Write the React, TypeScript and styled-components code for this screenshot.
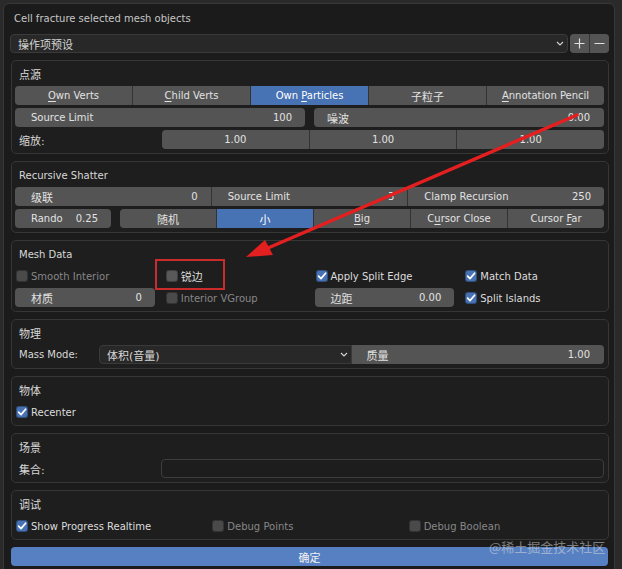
import React from "react";
import styled, { createGlobalStyle } from "styled-components";

const GlobalStyle = createGlobalStyle`
  html, body { margin: 0; padding: 0; }
  body {
    background: #2a2a2a;
    font-family: "DejaVu Sans", "Noto Sans CJK SC", sans-serif;
    font-size: 10px;
    color: #dcdcdc;
    overflow: hidden;
  }
  * { box-sizing: border-box; }
`;

const Stage = styled.div`
  position: relative;
  width: 622px;
  height: 569px;
  overflow: hidden;
  padding: 3px 7px 0 3px;
`;

const Dialog = styled.div`
  width: 612px;
  height: 600px;
  background: #1b1b1b;
  border: 1px solid #383838;
  border-radius: 6px;
  padding: 0 5px 0 7px;
  display: flex;
  flex-direction: column;
  gap: 7px;
`;

const Title = styled.div`
  height: 23px;
  padding: 6px 0 0 3px;
  display: flex;
  align-items: center;
  color: #c6c6c6;
`;

const Zh = styled.span`
  font-size: 11px;
`;

const U = styled.span`
  text-decoration: underline;
  text-decoration-thickness: 1px;
  text-underline-offset: 2px;
`;

const PresetRow = styled.div`
  display: flex;
  gap: 2px;
  height: 19px;
  margin-left: -1px;
`;

const Dropdown = styled.div<{ $joined?: boolean }>`
  flex: 1;
  min-width: 0;
  display: flex;
  align-items: center;
  justify-content: space-between;
  padding: 0 3px 0 7px;
  background: #282828;
  border: 1px solid #3a3a3a;
  border-radius: ${(p) => (p.$joined ? "4px 0 0 4px" : "4px")};
  color: #d6d6d6;
  white-space: nowrap;
`;

const Group = styled.div<{ $w?: number }>`
  display: flex;
  gap: 1px;
  background: #333333;
  border-radius: 4px;
  overflow: hidden;
  height: 19px;
  ${(p) => (p.$w ? `flex: 0 0 ${p.$w}px;` : "flex: 1;")}
`;

const IconBtn = styled.div`
  width: 19px;
  display: flex;
  align-items: center;
  justify-content: center;
  background: #545454;
`;

const Panel = styled.section`
  background: #1e1e1e;
  border: 1px solid #363636;
  border-radius: 5px;
  padding: 0 4px 4px 3px;
`;

const PanelHeader = styled.div`
  height: 25px;
  display: flex;
  align-items: center;
  padding: 1px 0 0 4px;
  color: #d8d8d8;
`;

const PanelBody = styled.div`
  display: flex;
  flex-direction: column;
  gap: 3px;
`;

const Row = styled.div<{ $gap?: number }>`
  display: flex;
  height: 19px;
  gap: ${(p) => p.$gap ?? 0}px;
`;

const MassRow = styled.div`
  display: grid;
  grid-template-columns: 84px 1fr 1fr;
  height: 19px;
`;

const Seg = styled.div<{ $on?: boolean }>`
  flex: 1;
  display: flex;
  align-items: center;
  justify-content: center;
  background: ${(p) => (p.$on ? "#4772b3" : "#545454")};
  color: ${(p) => (p.$on ? "#ffffff" : "#e2e2e2")};
  white-space: nowrap;
`;

const Num = styled.div<{ $pl?: number; $pr?: number }>`
  flex: 1;
  display: flex;
  align-items: center;
  justify-content: space-between;
  padding: 0 ${(p) => p.$pr ?? 13}px 0 ${(p) => p.$pl ?? 16}px;
  background: #545454;
  color: #e2e2e2;
  white-space: nowrap;
`;

const JoinedField = styled(Num)`
  border-radius: 0 4px 4px 0;
`;

const LabelCell = styled.div<{ $w: number }>`
  flex: 0 0 ${(p) => p.$w}px;
  display: flex;
  align-items: center;
  padding-left: 4px;
  color: #d8d8d8;
  white-space: nowrap;
`;

const TextBox = styled.div`
  flex: 1;
  border: 1px solid #3d3d3d;
  border-radius: 4px;
  background: #1d1d1d;
`;

const Grid = styled.div<{ $cols: number; $gap: number }>`
  display: grid;
  grid-template-columns: repeat(${(p) => p.$cols}, 1fr);
  column-gap: ${(p) => p.$gap}px;
  row-gap: 3px;
`;

const CheckCell = styled.div<{ $dim?: boolean }>`
  display: flex;
  align-items: center;
  gap: 3px;
  height: 19px;
  padding: 1px 0 0 1px;
  color: ${(p) => (p.$dim ? "#878787" : "#dcdcdc")};
  white-space: nowrap;
`;

const Box = styled.span<{ $on?: boolean; $dim?: boolean }>`
  flex: 0 0 12px;
  width: 12px;
  height: 12px;
  border-radius: 3px;
  display: flex;
  align-items: center;
  justify-content: center;
  background: ${(p) => (p.$on ? "#4772b3" : p.$dim ? "#4a4a4a" : "#595959")};
  border: 1px solid rgba(0, 0, 0, 0.3);
`;

const OkButton = styled.div`
  height: 19px;
  margin-right: 1px;
  background: #5680c2;
  border-radius: 4px;
  display: flex;
  align-items: center;
  justify-content: center;
  color: #f2f2f2;
`;

const Overlay = styled.svg`
  position: absolute;
  left: 0;
  top: 0;
  width: 622px;
  height: 569px;
  pointer-events: none;
`;

const Watermark = styled.div`
  position: absolute;
  left: 489px;
  top: 539px;
  font-family: "Noto Sans CJK SC", sans-serif;
  font-size: 13px;
  line-height: 15px;
  color: rgba(225, 225, 225, 0.5);
  white-space: nowrap;
`;

const Chevron = () => (
  <svg width="8" height="5" viewBox="0 0 8 5">
    <polyline points="1,1 4,4 7,1" fill="none" stroke="#cfcfcf" strokeWidth="1.2" />
  </svg>
);

const Check = ({ on, dim, children }: { on?: boolean; dim?: boolean; children: React.ReactNode }) => (
  <CheckCell $dim={dim}>
    <Box $on={on} $dim={dim}>
      {on && (
        <svg width="10" height="10" viewBox="0 0 10 10">
          <polyline points="1.6,5.2 4,7.6 8.6,2.2" fill="none" stroke="#ffffff" strokeWidth="1.7" strokeLinecap="round" strokeLinejoin="round" />
        </svg>
      )}
    </Box>
    <span>{children}</span>
  </CheckCell>
);

export default function App() {
  return (
    <>
      <GlobalStyle />
      <Stage>
        <Dialog>
          <Title>Cell fracture selected mesh objects</Title>

          <PresetRow>
            <Dropdown>
              <Zh>操作项预设</Zh>
              <Chevron />
            </Dropdown>
            <Group $w={39}>
              <IconBtn>
                <svg width="11" height="11" viewBox="0 0 11 11">
                  <path d="M5.5 0.5v10M0.5 5.5h10" stroke="#e0e0e0" strokeWidth="1.2" />
                </svg>
              </IconBtn>
              <IconBtn>
                <svg width="11" height="11" viewBox="0 0 11 11">
                  <path d="M0.5 5.5h10" stroke="#e0e0e0" strokeWidth="1.2" />
                </svg>
              </IconBtn>
            </Group>
          </PresetRow>

          <Panel>
            <PanelHeader><Zh>点源</Zh></PanelHeader>
            <PanelBody>
              <Row>
                <Group>
                  <Seg><span><U>O</U>wn Verts</span></Seg>
                  <Seg><span><U>C</U>hild Verts</span></Seg>
                  <Seg $on><span>Own <U>P</U>articles</span></Seg>
                  <Seg><Zh>子粒子</Zh></Seg>
                  <Seg><span><U>A</U>nnotation Pencil</span></Seg>
                </Group>
              </Row>
              <Row $gap={9}>
                <Group>
                  <Num><span>Source Limit</span><span>100</span></Num>
                </Group>
                <Group>
                  <Num $pl={13} $pr={14}><Zh>噪波</Zh><span>0.00</span></Num>
                </Group>
              </Row>
              <Row>
                <LabelCell $w={147}><Zh>缩放:</Zh></LabelCell>
                <Group>
                  <Seg>1.00</Seg>
                  <Seg>1.00</Seg>
                  <Seg>1.00</Seg>
                </Group>
              </Row>
            </PanelBody>
          </Panel>

          <Panel>
            <PanelHeader>Recursive Shatter</PanelHeader>
            <PanelBody>
              <Row>
                <Group>
                  <Num><Zh>级联</Zh><span>0</span></Num>
                  <Num><span>Source Limit</span><span>3</span></Num>
                  <Num><span>Clamp Recursion</span><span>250</span></Num>
                </Group>
              </Row>
              <Row $gap={9}>
                <Group $w={96}>
                  <Num><span>Rando</span><span>0.25</span></Num>
                </Group>
                <Group>
                  <Seg><Zh>随机</Zh></Seg>
                  <Seg $on><Zh>小</Zh></Seg>
                  <Seg><span><U>B</U>ig</span></Seg>
                  <Seg><span>C<U>u</U>rsor Close</span></Seg>
                  <Seg><span>Cursor <U>F</U>ar</span></Seg>
                </Group>
              </Row>
            </PanelBody>
          </Panel>

          <Panel>
            <PanelHeader>Mesh Data</PanelHeader>
            <Grid $cols={4} $gap={10}>
              <Check dim>Smooth Interior</Check>
              <Check><Zh>锐边</Zh></Check>
              <Check on>Apply Split Edge</Check>
              <Check on>Match Data</Check>
              <Group>
                <Num><Zh>材质</Zh><span>0</span></Num>
              </Group>
              <Check dim>Interior VGroup</Check>
              <Group>
                <Num><Zh>边距</Zh><span>0.00</span></Num>
              </Group>
              <Check on>Split Islands</Check>
            </Grid>
          </Panel>

          <Panel>
            <PanelHeader><Zh>物理</Zh></PanelHeader>
            <PanelBody>
              <MassRow>
                <LabelCell $w={84}>Mass Mode:</LabelCell>
                <Dropdown $joined>
                  <Zh>体积(音量)</Zh>
                  <Chevron />
                </Dropdown>
                <JoinedField $pl={15} $pr={14}><Zh>质量</Zh><span>1.00</span></JoinedField>
              </MassRow>
            </PanelBody>
          </Panel>

          <Panel>
            <PanelHeader><Zh>物体</Zh></PanelHeader>
            <PanelBody>
              <Check on>Recenter</Check>
            </PanelBody>
          </Panel>

          <Panel>
            <PanelHeader><Zh>场景</Zh></PanelHeader>
            <PanelBody>
              <Row>
                <LabelCell $w={146}><Zh>集合:</Zh></LabelCell>
                <TextBox />
              </Row>
            </PanelBody>
          </Panel>

          <Panel>
            <PanelHeader><Zh>调试</Zh></PanelHeader>
            <Grid $cols={3} $gap={0}>
              <Check on>Show Progress Realtime</Check>
              <Check dim>Debug Points</Check>
              <Check dim>Debug Boolean</Check>
            </Grid>
          </Panel>

          <OkButton><Zh>确定</Zh></OkButton>
        </Dialog>

        <Overlay viewBox="0 0 622 569">
          <rect x="156" y="260" width="68" height="29" fill="none" stroke="#cc2b2b" strokeWidth="2" />
          <line x1="577" y1="115" x2="268" y2="248" stroke="#e3201f" strokeWidth="3.5" strokeLinecap="round" />
          <polygon points="246,257 265,240 273,255" fill="#e3201f" />
        </Overlay>
        <Watermark>@稀土掘金技术社区</Watermark>
      </Stage>
    </>
  );
}
